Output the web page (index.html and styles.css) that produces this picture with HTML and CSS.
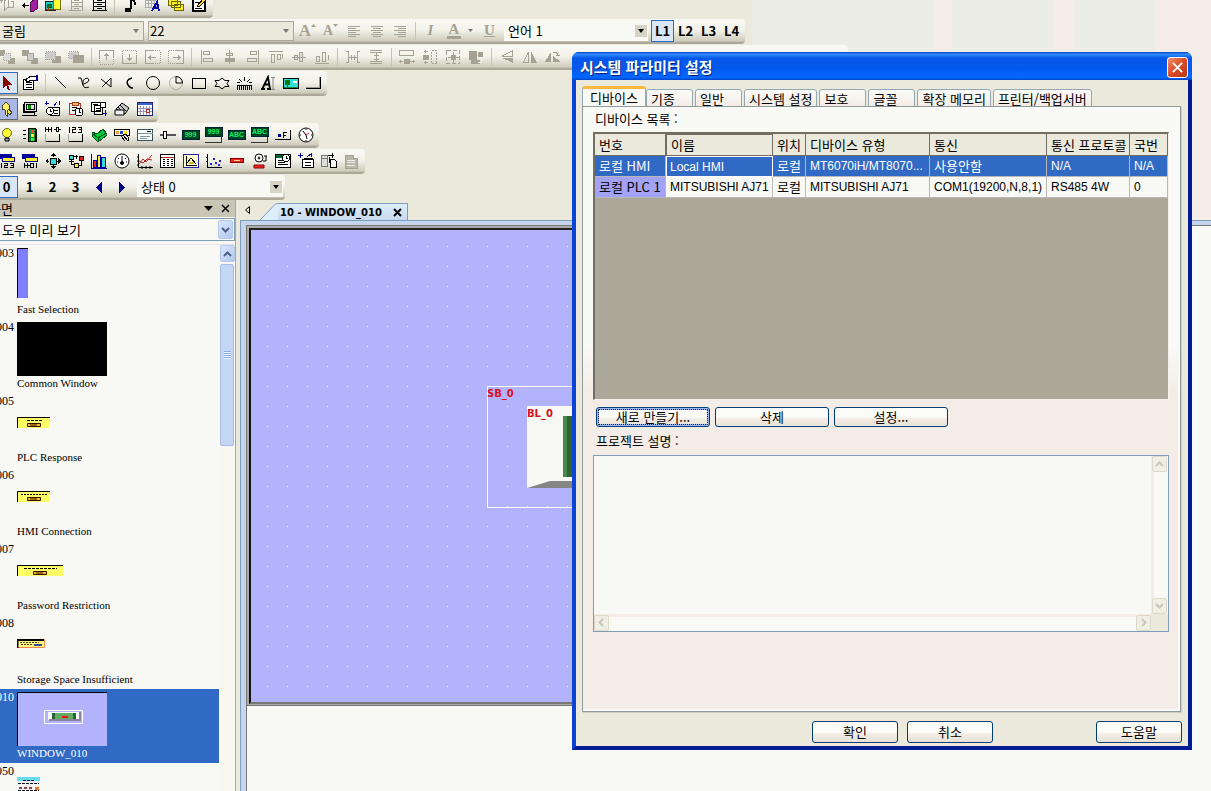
FILE: index.html
```
<!DOCTYPE html>
<html lang="ko">
<head>
<meta charset="utf-8">
<title>시스템 파라미터 설정</title>
<link rel="stylesheet" href="styles.css">
</head>
<body>
<div class="app">
<header class="toolbars">

<div class="bar bar-first">
<button class="tb" aria-label="가져오기"><svg class="i g" viewBox="0 0 16 16"><path d="M0 3.500h4M2.500 1v5M5.500 4v9l4-3V1zM9.500 10h5V4h-3"/></svg></button>
<button class="tb" aria-label="내보내기"><svg class="i" viewBox="0 0 16 16"><path d="M8 6l5-4 2 1v9l-5 3-2-1z" fill="#a020a0" stroke="#501050"/><path d="M0 8.500h7M2.500 6v5M1.500 7v3"/></svg></button>
<button class="tb" aria-label="그림"><svg class="i" viewBox="0 0 16 16"><path d="M.5 4.500h10v9h-10z" fill="#2cc" stroke="#222"/><path d="M8 1h7v11H8z" fill="#ff3" stroke="#770"/><path d="M2 7h4v3H2z" fill="#083" stroke="#052"/><path d="M3.500 10v4M1 12.500h9" stroke="#840"/></svg></button>
<button class="tb" aria-label="서랍"><svg class="i g" viewBox="0 0 16 16"><path d="M3.500 0v14M14.500 0v14M3 1.500h11M3 5.500h11M3 9.500h11M1 13.500h12M6 3.500h5M6 7.500h5M6 11.500h5"/></svg></button>
<button class="tb" aria-label="보관함"><svg class="i" viewBox="0 0 16 16"><path d="M2.500 0v14M14.500 0v14M2 1.500h12M2 5.500h12M2 9.500h12M1 13.500h15M6 3.500h5M6 7.500h5M6 11.500h5"/></svg></button>
<span class="sep"></span>
<button class="tb" aria-label="소리"><svg class="i" viewBox="0 0 16 16"><path d="M8.500 12V0M9.500 1l3 4v3" stroke-width="2"/><path d="M3 11h5v3H3z" fill="#000"/></svg></button>
<button class="tb" aria-label="글자 표"><svg class="i" viewBox="0 0 16 16"><path d="M.5 0v10h11V0M3.500 0v10M6.500 0v10M9.500 0v10M0 3.500h11M0 6.500h11" stroke="#aaa"/><path d="M7 14l5-9 2 9M9 11h5" stroke="#00a" stroke-width="2"/></svg></button>
<button class="tb" aria-label="태그"><svg class="i" viewBox="0 0 16 16"><path d="M.5 1.500h9v7h-9zM3.500 4.500h9v6h-9zM6.500 7.500h9v6h-9z" fill="#fe2" stroke="#660"/></svg></button>
<button class="tb" aria-label="편집"><svg class="i" viewBox="0 0 16 16"><path d="M1.500 1.500h12v12h-12z" fill="#fff" stroke-width="2"/><path d="M4 5h4M4 11h7"/><path d="M6 9l7-8 2 2-7 7z" fill="#fd2"/></svg></button>
</div>

<div class="bar bar-font">
<select class="cmb cmb-off" aria-label="글꼴"><option>굴림</option></select>
<select class="cmb cmb-off" aria-label="크기"><option>22</option></select>
<button class="tb glyph" aria-label="글자 크게">A<svg class="mini" viewBox="0 0 5 3"><path d="M0 3l2.500-3L5 3z"/></svg></button>
<button class="tb glyph small" aria-label="글자 작게">A<svg class="mini" viewBox="0 0 5 3"><path d="M0 0l2.500 3L5 0z"/></svg></button>
<button class="tb" aria-label="왼쪽"><svg class="i g" viewBox="0 0 16 16"><path d="M2 3.500h12M2 5.500h8M2 7.500h12M2 9.500h8M2 11.500h12M2 13.500h8"/></svg></button>
<button class="tb" aria-label="가운데"><svg class="i g" viewBox="0 0 16 16"><path d="M2 3.500h12M4 5.500h8M2 7.500h12M4 9.500h8M2 11.500h12M4 13.500h8"/></svg></button>
<button class="tb" aria-label="오른쪽"><svg class="i g" viewBox="0 0 16 16"><path d="M2 3.500h12M6 5.500h8M2 7.500h12M6 9.500h8M2 11.500h12M6 13.500h8"/></svg></button>
<span class="sep"></span>
<button class="tb glyph italic" aria-label="기울임">I</button>
<button class="tb glyph wide color" aria-label="글자색"><span>A</span><svg class="mini" viewBox="0 0 5 3"><path d="M0 0l2.500 3L5 0z"/></svg></button>
<button class="tb glyph line" aria-label="밑줄">U</button>
<select class="cmb" aria-label="언어"><option>언어 1</option></select>
<button class="tb on lang">L1</button><button class="tb lang">L2</button><button class="tb lang">L3</button><button class="tb lang">L4</button>
</div>

<div class="bar bar-align">
<button class="tb" aria-label="맨 앞으로"><svg class="i g" viewBox="0 0 16 16"><path d="M0 1h6v6H0zM9 9h7v6H9z" class="gf"/><path d="M4.500 4.500h7v7h-7z" fill="#ddd" stroke-dasharray="1 1"/></svg></button>
<button class="tb" aria-label="맨 뒤로"><svg class="i g" viewBox="0 0 16 16"><path d="M0 1h7v6H0zM9 9h7v6H9z" class="gf"/><path d="M5.500 4.500h6v7h-6z" fill="#ccc"/></svg></button>
<button class="tb" aria-label="앞으로"><svg class="i g" viewBox="0 0 16 16"><path d="M7 7h9v7H7z" class="gf"/><path d="M.5 2.500h10v8H.5z" fill="#ccc" stroke-dasharray="1 1"/></svg></button>
<button class="tb" aria-label="뒤로"><svg class="i g" viewBox="0 0 16 16"><path d="M.5 2.500h10v7H.5z" fill="#ccc" stroke-dasharray="1 1"/><path d="M5 6h11v8H5z" class="gf"/></svg></button>
<span class="sep"></span>
<button class="tb" aria-label="위로 이동"><svg class="i g" viewBox="0 0 16 16"><path d="M.5 9V1.500h14V9M7.500 11V4M5 6.500h5M6 5.500h3"/><path d="M.5 9v6h14V9" stroke-dasharray="1 1"/></svg></button>
<button class="tb" aria-label="아래로 이동"><svg class="i g" viewBox="0 0 16 16"><path d="M.5 7v7.500h14V7M7.500 5v7M5 9.500h5M6 10.500h3"/><path d="M.5 7V1.500h14V7" stroke-dasharray="1 1"/></svg></button>
<button class="tb" aria-label="왼쪽으로 이동"><svg class="i g" viewBox="0 0 16 16"><path d="M8 1.500H.5v13H8M3 8.500h8M5.500 6v5M4.500 7v3"/><path d="M8 1.500h7v13H8" stroke-dasharray="1 1"/></svg></button>
<button class="tb" aria-label="오른쪽으로 이동"><svg class="i g" viewBox="0 0 16 16"><path d="M8 1.500h7.500v13H8M5 8.500h8M10.500 6v5M11.500 7v3"/><path d="M8 1.500H.5v13H8" stroke-dasharray="1 1"/></svg></button>
<span class="sep"></span>
<button class="tb" aria-label="왼쪽 맞춤"><svg class="i g" viewBox="0 0 16 16"><path d="M2.500 1v14M4.500 2.500h6v3h-6zM4.500 9.500h9v3h-9z" stroke-width="1"/></svg></button>
<button class="tb" aria-label="세로 가운데 맞춤"><svg class="i g" viewBox="0 0 16 16"><path d="M7.500 1v14M4.500 4.500h6v2h-6z"/><path d="M3 9h10v4H3z" class="gf"/></svg></button>
<button class="tb" aria-label="오른쪽 맞춤"><svg class="i g" viewBox="0 0 16 16"><path d="M13.500 1v14M5.500 2.500h6v3h-6zM2.500 9.500h9v3h-9z"/></svg></button>
<button class="tb" aria-label="위쪽 맞춤"><svg class="i g" viewBox="0 0 16 16"><path d="M1 2.500h14M3.500 5.500h3v8h-3zM9.500 5.500h3v5h-3zM14.500 5v5"/></svg></button>
<button class="tb" aria-label="가로 가운데 맞춤"><svg class="i g" viewBox="0 0 16 16"><path d="M1 8.500h14M3.500 6.500h3v4h-3zM8.500 3.500h3v9h-3z" fill="#ddd"/></svg></button>
<button class="tb" aria-label="아래쪽 맞춤"><svg class="i g" viewBox="0 0 16 16"><path d="M1 14.500h14M2.500 7.500h3v5h-3zM8.500 3.500h3v9h-3zM14.500 6v5"/></svg></button>
<span class="sep"></span>
<button class="tb" aria-label="가로 간격"><svg class="i g" viewBox="0 0 16 16"><path d="M1 2.500h2.500v11H1M15 2.500h-2.500v11H15M4 8.500h8M6.500 6v5M9.500 6v5"/></svg></button>
<button class="tb" aria-label="세로 간격"><svg class="i g" viewBox="0 0 16 16"><path d="M2 1.500h12M2 3.500h12M8.500 4v8M6 6.500h5M6 10.500h5M2 12.500h12M2 14.500h12"/></svg></button>
<span class="sep"></span>
<button class="tb" aria-label="같은 너비"><svg class="i g" viewBox="0 0 16 16"><path d="M.5 1.500h14v5H.5z"/><path d="M0 12.500h4M11 12.500h5M1.500 11v3M14.500 11v3"/><path d="M5 10h6v5H5z" class="gf"/></svg></button>
<button class="tb" aria-label="같은 높이"><svg class="i g" viewBox="0 0 16 16"><path d="M9.500 1.500h5v13h-5z" stroke-dasharray="2 1"/><path d="M3.500 1v3M3.500 12v3M2 2.500h4M2 13.500h4"/><path d="M1 6h6v5H1z" class="gf"/></svg></button>
<button class="tb" aria-label="같은 크기"><svg class="i g" viewBox="0 0 16 16"><path d="M1.500 1.500h13v13h-13z" stroke-dasharray="4 2"/><path d="M8.500 3v3M8.500 10v4M3 8.500h3M11 8.500h3"/><path d="M6 6h5v5H6z" class="gf"/></svg></button>
<button class="tb" aria-label="그룹"><svg class="i g" viewBox="0 0 16 16"><path d="M1 2h8v9H1zM10 3h5v5h-5zM3 11h9v4H3z" class="gf"/><path d="M9.500 8.500h4v5h-4" stroke="#eee"/></svg></button>
<span class="sep"></span>
<button class="tb" aria-label="상하 대칭"><svg class="i g" viewBox="0 0 16 16"><path d="M13.500 2v5H3z"/><path d="M3 9h11v5z" class="gf"/></svg></button>
<button class="tb" aria-label="좌우 대칭"><svg class="i g" viewBox="0 0 16 16"><path d="M6.500 3v10h-5z"/><path d="M9 2v12h6z" class="gf"/></svg></button>
<button class="tb" aria-label="회전"><svg class="i g" viewBox="0 0 16 16"><path d="M6 3L0 13h6zM8 13h8L8 7z" class="gf"/><path d="M8 3h3l2 3M11 6h4"/></svg></button>
</div>

<div class="bar">
<button class="tb on" aria-label="선택"><svg class="i" viewBox="0 0 16 16"><path d="M4 1v12l3-3 2 5h2l-2-5h4z" fill="#800" stroke="none"/></svg></button>
<button class="tb" aria-label="속성"><svg class="i" viewBox="0 0 16 16"><path d="M1.500 4.500h10v10h-10z" fill="#fff"/><path d="M4 7h6M4 9.500h6M4 12h6"/><path d="M3 5l6-4h5v4H9L6 7z" fill="#fff"/><path d="M14.500 0v6" stroke="#009" stroke-width="2"/></svg></button>
<span class="sep"></span>
<button class="tb" aria-label="직선"><svg class="i" viewBox="0 0 16 16"><path d="M2 2l11 11"/></svg></button>
<button class="tb" aria-label="곡선"><svg class="i s" viewBox="0 0 16 16"><path d="M2 3h3l2 7M7 10Q6 5 9 3.500T13 5Q13 7 8 9M7 10Q8 14 13 12"/></svg></button>
<button class="tb" aria-label="다각선"><svg class="i s" viewBox="0 0 16 16"><path d="M2 4l10 8V3L3 12"/></svg></button>
<button class="tb" aria-label="호"><svg class="i s" viewBox="0 0 16 16"><path d="M10 3Q3 5 6 10Q8 13 11 13" stroke-width="1.500"/></svg></button>
<button class="tb" aria-label="원"><svg class="i s" viewBox="0 0 16 16"><circle cx="8" cy="8" r="6.500"/></svg></button>
<button class="tb" aria-label="부채꼴"><svg class="i s" viewBox="0 0 16 16"><circle cx="8" cy="8" r="6.500" stroke="#aaa"/><path d="M8 1.500V8h6.500Q14 2 8 1.500z"/></svg></button>
<button class="tb" aria-label="사각형"><svg class="i" viewBox="0 0 16 16"><rect x="1.500" y="3.500" width="13" height="10" rx="1"/></svg></button>
<button class="tb" aria-label="다각형"><svg class="i s" viewBox="0 0 16 16"><path d="M1 5.500h4L8 3l3 2.500h4L13 8.500l2 3h-4L8 14l-3-2.500H1l2-3z"/></svg></button>
<button class="tb" aria-label="눈금"><svg class="i" viewBox="0 0 16 16"><path d="M.5 10v5M2.500 10v5M4.500 10v5M6.500 10v5M8.500 10v5M10.500 10v5M12.500 10v5M14.500 10v5M0 10.500h15M7.500 2v4M2 4l3 3M13 4l-3 3M0 7.500h3M12 7.500h3"/></svg></button>
<button class="tb" aria-label="문자"><svg class="i s" viewBox="0 0 16 16"><path d="M1 14h4M7 14h4M2.500 13.500L8 2l2 12M5 9.500h4" stroke-width="1.800"/><path d="M11 2.500h4M13 3v11M11 14.500h4" stroke="#888"/></svg></button>
<button class="tb" aria-label="이미지"><svg class="i" viewBox="0 0 16 16"><path d="M.5 3.500h15v10H.5z" fill="#3dd"/><path d="M2 5h5v5H2z" fill="#070" stroke="none"/><path d="M10 6h4v2h-4z" fill="#fff" stroke="none"/><path d="M4.500 9v3" stroke="#840"/><path d="M1 12.500h14" stroke="#283"/></svg></button>
<button class="tb" aria-label="버튼"><svg class="i" viewBox="0 0 16 16"><path d="M0 13.500h14.500V2"/><path d="M0 12.500h13.500V2" stroke="#999"/></svg></button>
</div>

<div class="bar">
<button class="tb press" aria-label="키"><svg class="i" viewBox="0 0 16 16"><path d="M3 5l4-4 3 3v4l-2 2v5l-2-2V9L3 8zM9 8l4 3-2 3-2-2" fill="#fe6" stroke="#442"/></svg></button>
<button class="tb" aria-label="장치"><svg class="i" viewBox="0 0 16 16"><path d="M2.500 1.500h12v9h-12zM0 14.500h15M1.500 3v8h11v3M4.500 3.500h8v5h-8z" fill="#ddd"/><path d="M6 4h3v4H6z" fill="#080" stroke="none"/></svg></button>
<button class="tb" aria-label="예약"><svg class="i" viewBox="0 0 16 16"><path d="M5.500 6.500h9v8h-9z" fill="#fff"/><circle cx="5" cy="10" r="3.500" fill="#fff"/><path d="M5 8v2h2M9 9h4M9 12h4"/><path d="M0 2h4M1.500 0v4M12 1l-3 4M14.500 0v4" stroke="#00a"/></svg></button>
<button class="tb" aria-label="클립보드"><svg class="i" viewBox="0 0 16 16"><path d="M1.500 2.500h11v11h-11z" fill="#eee" stroke="#a33"/><path d="M4 1h6v3H4z" fill="#fc3" stroke="#a33"/><circle cx="11" cy="11" r="4" fill="#fff"/><path d="M11 8v3h2M3.500 6.500h5M3.500 9.500h3"/></svg></button>
<button class="tb" aria-label="기록"><svg class="i" viewBox="0 0 16 16"><path d="M.5 1.500h9v9h-9zM3.500 4.500h8v9h-8z" fill="#fff"/><path d="M2 3.500h5M5 7h5M5 9.500h5"/><circle cx="12" cy="4" r="3" fill="#fff"/><path d="M14.500 9v6M12 12.500h4" stroke="#00a"/></svg></button>
<button class="tb" aria-label="카드"><svg class="i s" viewBox="0 0 16 16"><path d="M2 8l6-6 7 5-4 6z" fill="#ccc"/><path d="M4 6l5 6M6 4l6 6"/><path d="M1 9h9v5H1z" fill="#eee"/></svg></button>
<button class="tb" aria-label="달력"><svg class="i" viewBox="0 0 16 16"><path d="M.5 1.500h15v13H.5z" fill="#fff" stroke="#226"/><path d="M1 3h14" stroke="#36c" stroke-width="2"/><path d="M3.500 5v9M6.500 5v9M9.500 5v9M12.500 5v9M1 7.500h14M1 10.500h14" stroke="#99b"/><path d="M9 8h3v3H9z" fill="#fff" stroke="#c22"/></svg></button>
</div>

<div class="bar">
<button class="tb" aria-label="램프"><svg class="i s" viewBox="0 0 16 16"><circle cx="8" cy="6" r="4.500" fill="#ff3" stroke="#662"/><path d="M6 11h4v3H6z" fill="#999"/></svg></button>
<button class="tb" aria-label="신호등"><svg class="i" viewBox="0 0 16 16"><path d="M6.500 1.500h7v13h-7z" fill="#083"/><path d="M9 3h2v2H9z" fill="#f44" stroke="#f44"/><path d="M9 7h2v2H9z" fill="#fe3" stroke="#fe3"/><path d="M9 11h2v2H9z" fill="#3f3" stroke="#3f3"/><path d="M1 3.500h3M1 7.500h3M1 11.500h3M14.500 2v13"/></svg></button>
<button class="tb" aria-label="비트 설정"><svg class="i" viewBox="0 0 16 16"><path d="M.5 0v5M3.500 0v5M0 2.500h6M6.500 0v5M9 2.500h2M11.500.5h2v4h-2zM14 2.500h2M1 14.500h13.500V7"/><path d="M.5 7v8" stroke="#aaa"/></svg></button>
<button class="tb" aria-label="워드 설정"><svg class="i" viewBox="0 0 16 16"><path d="M1.500 0v6M4 .5h3.500v2h-3v3H8M10 .5h3.500v5H10M11 2.500h2M1 14.500h13.500V7"/><path d="M.5 7v8" stroke="#aaa"/></svg></button>
<button class="tb" aria-label="기능 키"><svg class="i" viewBox="0 0 16 16"><path d="M1 5l5 2 6-5 3 4v3l-8 6-6-6z" fill="#0c3" stroke="#052"/><path d="M1 6l6 5 8-5M7 11v4" stroke="#052"/></svg></button>
<button class="tb" aria-label="토글"><svg class="i" viewBox="0 0 16 16"><path d="M.5 2.500h15v6H.5z" fill="#fff"/><path d="M2 4h3v3H2z" fill="#da2" stroke="none"/><path d="M6 4h3v3H6z" fill="#24c" stroke="none"/><path d="M10 4h3v3h-3z" fill="#fd2" stroke="none"/><path d="M9 8l5 6 1-3-3-4zM7 9l4 5" fill="#eee"/></svg></button>
<button class="tb" aria-label="콤보"><svg class="i" viewBox="0 0 16 16"><path d="M.5 2.500h15v11H.5z" fill="#fff" stroke="#355"/><path d="M.5 6.500h15M3 9.500h10M3 11.500h7" stroke="#799"/><path d="M10 4.500h4" stroke="#000"/></svg></button>
<button class="tb" aria-label="슬라이더"><svg class="i" viewBox="0 0 16 16"><path d="M0 7.500h15v1H0z" stroke="#555"/><path d="M3.500 4.500h3v7h-3z" fill="#fff"/></svg></button>
<button class="tb lcd" aria-label="숫자 표시"><span>999</span></button>
<button class="tb lcd pad" aria-label="숫자 입력"><span>999</span></button>
<button class="tb lcd" aria-label="문자 표시"><span>ABC</span></button>
<button class="tb lcd pad" aria-label="문자 입력"><span>ABC</span></button>
<button class="tb" aria-label="기능"><svg class="i" viewBox="0 0 16 16"><path d="M0 12.500h15.500V3"/><path d="M3 7h3v3H3z" fill="#008" stroke="none"/><path d="M8.500 11V5.500H12M8 8.500h3"/></svg></button>
<button class="tb" aria-label="시계"><svg class="i s" viewBox="0 0 16 16"><circle cx="8" cy="8" r="7" fill="#fff"/><path d="M8 8L5 4M8 8l1 4M8 2v1M8 13v1M2 8h1M13 8h1"/><path d="M8 8l3-2" stroke="#c22"/></svg></button>
</div>

<div class="bar">
<button class="tb" aria-label="간접 숫자"><svg class="i" viewBox="0 0 16 16"><path d="M0 1h12v4H0z" fill="#009" stroke="#009"/><path d="M3 4h12v4H3z" fill="#fe3" stroke="#009"/><path d="M2.500 10v5M5 10.500h3v2H5.500v2H9M11 10.500h3v4h-3M12 12.500h2"/></svg></button>
<button class="tb" aria-label="간접 비트"><svg class="i" viewBox="0 0 16 16"><path d="M0 1h12v4H0z" fill="#009" stroke="#009"/><path d="M3 4h12v4H3z" fill="#fe3" stroke="#009"/><path d="M2.500 10v5M5.500 10v5M3 12.500h5M8.500 10.500h3v4h-3zM14.500 10v5"/></svg></button>
<button class="tb" aria-label="이동"><svg class="i" viewBox="0 0 16 16"><path d="M5 5h6v6H5z" fill="#3dd"/><path d="M8 1v3M8 12v3M1 8h3M12 8h3" /><path d="M8 0l3 3H5zM8 16l3-3H5zM0 8l3-3v6zM16 8l-3-3v6z" fill="#000" stroke="none"/></svg></button>
<button class="tb" aria-label="애니메이션"><svg class="i" viewBox="0 0 16 16"><path d="M1 2h4v4H1z" fill="#3dd"/><path d="M11 3h4v4h-4z" fill="#d22"/><path d="M6 10h4v4H6z" fill="#fe3"/><path d="M6 3.500h4M8.500 2v4M13.500 8v4h-3M3.500 7v4h2M1 8.500h5"/></svg></button>
<button class="tb" aria-label="막대"><svg class="i" viewBox="0 0 16 16"><path d="M.5 1v14h15" stroke="#009"/><path d="M2 7h3v7H2z" fill="#e22" stroke="#009"/><path d="M6 2h3v12H6z" fill="#fe3" stroke="#009"/><path d="M10 4h4v10h-4z" fill="#3dd" stroke="#009"/></svg></button>
<button class="tb" aria-label="계기"><svg class="i s" viewBox="0 0 16 16"><circle cx="8" cy="8" r="7" fill="#fff"/><path d="M8 10V3M4 5l1 1M12 5l-1 1M3 9h1M12 9h1"/><circle cx="8" cy="10" r="1.500" fill="#000"/></svg></button>
<button class="tb" aria-label="추세"><svg class="i s" viewBox="0 0 16 16"><path d="M1.500 1v13.500H16M0 4h2M0 8h2M0 12h2M5 13v3M9 13v3M13 13v3"/><path d="M2 11l4-5 3 3 6-7" stroke="#b22"/><path d="M2 8l4 2 4-4 5 1" stroke="#b22"/></svg></button>
<button class="tb" aria-label="이력"><svg class="i" viewBox="0 0 16 16"><path d="M.5 1.500h14v13H.5z" fill="#fff"/><path d="M1 4.500h13" stroke="#a22"/><path d="M3 6.500h10M3 8.500h10M3 10.500h10M3 12.500h10" stroke-dasharray="2 2"/></svg></button>
<button class="tb" aria-label="데이터 블록"><svg class="i" viewBox="0 0 16 16"><path d="M.5 1.500h15v13H.5z" fill="#ffc" stroke="#22a"/><path d="M3.500 3v9.500H14M4 10l4-5 5 6"/><path d="M6 9h5v2H6z" fill="#da2" stroke="none"/></svg></button>
<button class="tb" aria-label="XY 그래프"><svg class="i" viewBox="0 0 16 16"><path d="M1.500 1v13.500H16M0 4h2M0 8h2"/><path d="M4 10h2v2H4zM7 5h2v2H7zM9 9h2v2H9zM13 7h2v2h-2zM12 11h2v2h-2z" fill="#22c" stroke="none"/></svg></button>
<button class="tb" aria-label="경보"><svg class="i" viewBox="0 0 16 16"><path d="M1.500 5.500h13v4h-13z" fill="#e22" stroke="#800"/><path d="M5 7.500h6" stroke="#fd8"/><path d="M4 11l-3 3M12 11l3 3M8 11v3" stroke="#ccc"/></svg></button>
<button class="tb" aria-label="이벤트"><svg class="i s" viewBox="0 0 16 16"><circle cx="7" cy="5" r="4" fill="#fff"/><circle cx="7" cy="5" r="1"/><path d="M11 8h3V3M12 3h3"/><path d="M2 12h10v3H2z" fill="#e22" stroke="#800"/></svg></button>
<button class="tb" aria-label="이벤트 표시"><svg class="i" viewBox="0 0 16 16"><path d="M.5 1.500h15v13H.5z" fill="#fff"/><path d="M1 3h8" stroke="#063" stroke-width="3"/><path d="M3 7.500h5M3 9.500h7M3 11.500h10"/><circle cx="11" cy="5" r="3.500" fill="#fff"/><path d="M11 3v2h2"/></svg></button>
<button class="tb" aria-label="전송"><svg class="i" viewBox="0 0 16 16"><path d="M4.500 6.500h11v8h-11z" fill="#fff"/><path d="M7 9.500h6M7 12.500h6M6 5h9" /><path d="M0 2.500h5M2.500 0v5M13.500 0v4M9 4l4-3" stroke="#00a"/></svg></button>
<button class="tb" aria-label="백업"><svg class="i" viewBox="0 0 16 16"><path d="M.5 2.500h6v11h-6zM1 5.500h5" fill="#ddd" stroke="#777"/><path d="M9.500 6.500h4l2 2v6h-6z" fill="#fff"/><path d="M7 2.500h6M11.500 0v5M8.500 4v6"/></svg></button>
<button class="tb" aria-label="기타"><svg class="i g" viewBox="0 0 16 16"><path d="M1 2h8v3h4v10H1z" fill="#bbb7a8"/><path d="M3 7.500h8M3 9.500h8M3 12.500h8" stroke="#eee"/></svg></button>
</div>

<div class="bar">
<button class="tb on num">0</button><button class="tb num">1</button><button class="tb num">2</button><button class="tb num">3</button>
<button class="tb" aria-label="이전 상태"><svg class="i" viewBox="0 0 16 16"><path d="M11 3v11L5 8.500z" fill="#008" stroke="none"/></svg></button>
<button class="tb" aria-label="다음 상태"><svg class="i" viewBox="0 0 16 16"><path d="M5 3v11l6-5.500z" fill="#008" stroke="none"/></svg></button>
<select class="cmb cmb-state" aria-label="상태"><option>상태 0</option></select>
</div>
</header>

<main class="work">
<aside class="pane">
<div class="pane-head"><span class="pane-name">화면</span>
<button class="pbtn" aria-label="메뉴"><svg width="9" height="5" viewBox="0 0 9 5"><path d="M0 0h9L4.500 5z"/></svg></button>
<button class="pbtn" aria-label="창 닫기"><svg width="9" height="9" viewBox="0 0 9 9"><path d="M1 1l7 7M8 1L1 8" stroke="#000" stroke-width="1.500"/></svg></button></div>
<div class="view"><select aria-label="보기"><option>도우 미리 보기</option></select><span class="xp"><svg viewBox="0 0 9 6"><path d="M1 1l3.500 3.500L8 1"/></svg></span></div>
<div class="list-box">
<ul class="list">
<li><span class="no">003</span><div class="th"><svg width="11" height="50"><path d="M0 0h11v50H0z" fill="#8080ff"/><path d="M.5 50V.5H11" fill="none" stroke="#000"/></svg></div><span class="cap">Fast Selection</span></li>
<li><span class="no">004</span><div class="th"><svg width="90" height="54"><path d="M0 0h90v54H0z"/></svg></div><span class="cap">Common Window</span></li>
<li><span class="no">005</span><div class="th mid"><svg width="33" height="11"><path d="M0 0h33v11H0z" fill="#ff6"/><path d="M.5 11V.5H33" fill="none" stroke="#000"/><path d="M10 3.500h15" stroke="#000" stroke-dasharray="3 1"/><path d="M10.500 6.500h13v3h-13z" fill="#fb2" stroke="#310"/><path d="M13 8h7" stroke="#310"/></svg></div><span class="cap">PLC Response</span></li>
<li><span class="no">006</span><div class="th mid"><svg width="33" height="11"><path d="M0 0h33v11H0z" fill="#ff6"/><path d="M.5 11V.5H33" fill="none" stroke="#000"/><path d="M4 3.500h27" stroke="#000" stroke-dasharray="2 1"/><path d="M10.500 6.500h13v3h-13z" fill="#fb2" stroke="#310"/><path d="M13 8h7" stroke="#310"/></svg></div><span class="cap">HMI Connection</span></li>
<li><span class="no">007</span><div class="th mid"><svg width="46" height="11"><path d="M0 0h46v11H0z" fill="#ff6"/><path d="M.5 11V.5H46" fill="none" stroke="#000"/><path d="M7 3.500h33" stroke="#000" stroke-dasharray="3 1"/><path d="M16.500 6.500h13v3h-13z" fill="#fb2" stroke="#310"/><path d="M19 8h7" stroke="#310"/></svg></div><span class="cap">Password Restriction</span></li>
<li><span class="no">008</span><div class="th mid"><svg width="28" height="9"><path d="M.5.5h27v8H.5z" fill="#ff8" stroke="#e84"/><path d="M.5 9V1H27" fill="none" stroke="#000" stroke-width="2"/><path d="M3 3.500h19M4 5.500h11" stroke="#630" stroke-dasharray="2 1"/><path d="M17 5h8v2h-8z" fill="#448"/></svg></div><span class="cap">Storage Space Insufficient</span></li>
<li class="sel"><span class="no">010</span><div class="th"><svg width="90" height="54"><path d="M0 0h90v54H0z" fill="#b3b3fb"/><path d="M.5 54V.5H90" fill="none" stroke="#000"/><path d="M27.500 18.500h38v13h-38z" fill="#b3b3fb" stroke="#fff"/><path d="M31 20h31v8H31z" fill="#fff"/><path d="M32 28h31v-8" fill="none" stroke="#889" stroke-width="2"/><path d="M35 21h24v6H35z" fill="#6a6"/><path d="M36.500 21v6M57.500 21v6" stroke="#263" stroke-width="3"/><path d="M45 24h6v2h-6z" fill="#e11"/></svg></div><span class="cap">WINDOW_010</span></li>
<li><span class="no">050</span><div class="th low"><svg width="23" height="18"><path d="M0 0h23v18H0z" fill="#f4f4f4"/><path d="M0 0h23v4H0z" fill="#6de"/><path d="M6 3.500h12M1 6.500h21M1 13.500h21" stroke="#112" stroke-dasharray="3 1"/><path d="M2 11h3M7 11h3M12 11h3" stroke="#844" stroke-width="2"/><path d="M18 10h4v3h-4z" fill="#e73"/></svg></div><span class="cap"></span></li>
</ul>
<div class="sb"><span class="xp"><svg viewBox="0 0 9 6"><path d="M1 5l3.500-3.500L8 5"/></svg></span><span class="knob"><i></i></span></div>
</div>
</aside>

<section class="doc">
<div class="tabs">
<svg class="back" viewBox="0 0 5 8"><path d="M4.500.5v7L.5 4z"/></svg>
<div class="dtab"><svg class="slope" viewBox="0 0 18 17"><path d="M0 17L15 1.500Q16 .5 18 .5V17z" fill="#dceefa"/><path d="M0 17L15 1.500Q16 .5 18 .5" fill="none" stroke="#7f9db9"/></svg><span>10 - WINDOW_010</span><button class="x" aria-label="탭 닫기"><svg width="9" height="9" viewBox="0 0 9 9"><path d="M1 1l7 7M8 1L1 8" stroke="#000" stroke-width="2"/></svg></button></div>
</div>
<div class="frame"><div class="mdi"><div class="canvas">
<svg class="art" width="800" height="472">
<defs><pattern id="dots" width="20" height="20" patternUnits="userSpaceOnUse" x="16" y="16"><path d="M0 0h1v1H0z" fill="#f4f4ff"/></pattern></defs>
<path d="M0 0h800v472H0z" fill="#b3b3fb"/><path d="M0 0h800v472H0z" fill="url(#dots)"/>
<path d="M236.500 156.500h360v121h-360z" fill="none" stroke="#fff"/>
<path d="M276 176h280v82H276z" fill="#f8f9f5"/>
<path d="M276 258l23-7h257v7z" fill="#858585"/>
<path d="M312 186h200v61H312z" fill="#478a4b"/><path d="M316 186h190v61H316z" fill="#2f6236"/>
<text x="236" y="167">SB_0</text><text x="276" y="187">BL_0</text>
</svg></div></div></div>
</section>
</main>

<div class="dlg" role="dialog" aria-labelledby="dt">
<div class="dlg-title"><h1 id="dt">시스템 파라미터 설정</h1><button class="close" aria-label="닫기"><svg viewBox="0 0 12 12"><path d="M1 1l10 10M11 1L1 11"/></svg></button></div>
<div class="dlg-body">
<div class="dtabs" role="tablist">
<button role="tab" class="cur">디바이스</button><button role="tab" class="t1">기종</button><button role="tab" class="t1">일반</button><button role="tab">시스템 설정</button><button role="tab" class="t1">보호</button><button role="tab" class="t1">글꼴</button><button role="tab">확장 메모리</button><button role="tab">프린터/백업서버</button>
</div>
<div class="panel">
<p class="lbl">디바이스 목록 :</p>
<div class="grid">
<table>
<colgroup><col class="c1"><col class="c2"><col class="c3"><col class="c4"><col class="c5"><col class="c6"><col class="c7"></colgroup>
<thead><tr><th>번호</th><th class="sorted">이름</th><th>위치</th><th>디바이스 유형</th><th>통신</th><th>통신 프로토콜</th><th>국번</th></tr></thead>
<tbody>
<tr class="hl"><td>로컬 HMI</td><td class="focus lat">Local HMI</td><td>로컬</td><td class="lat">MT6070iH/MT8070...</td><td>사용안함</td><td class="lat">N/A</td><td class="lat">N/A</td></tr>
<tr><td class="key">로컬 PLC 1</td><td class="lat">MITSUBISHI AJ71</td><td>로컬</td><td class="lat">MITSUBISHI AJ71</td><td class="lat">COM1(19200,N,8,1)</td><td class="lat">RS485 4W</td><td class="lat">0</td></tr>
</tbody></table>
</div>
<div class="row"><button class="btn w focusb">새로 만들기...</button><button class="btn w">삭제</button><button class="btn w">설정...</button></div>
<label class="lbl2" for="desc">프로젝트 설명 :</label>
<div class="ta"><textarea id="desc"></textarea>
<div class="vs"><span class="dis"><svg viewBox="0 0 9 6"><path d="M1 5l3.500-3.500L8 5"/></svg></span><span class="dis"><svg viewBox="0 0 9 6"><path d="M1 1l3.500 3.500L8 1"/></svg></span></div>
<div class="hs"><span class="dis"><svg viewBox="0 0 9 9"><path d="M6 1L2.500 4.500 6 8"/></svg></span><span class="dis"><svg viewBox="0 0 9 9"><path d="M3 1l3.500 3.500L3 8"/></svg></span></div>
</div>
</div>
<div class="foot"><button class="btn">확인</button><button class="btn">취소</button><button class="btn help">도움말</button></div>
</div>
</div>
</div>
</body>
</html>
```
FILE: styles.css
```
* { box-sizing: border-box; }
html, body { height: 100%; }
body {
  margin: 0; overflow: hidden; color: #000;
  font: 13px/16px "Noto Sans CJK KR", "Liberation Sans", sans-serif;
}
button, select, textarea { font: inherit; color: inherit; }
button { border: 0; background: none; padding: 0; }
.app {
  position: relative; height: 100%; overflow: hidden; display: flex; flex-direction: column;
  background: linear-gradient(90deg, #ebe9dc 752px, #ebede6 752px 934px, #f4ece6 934px 952px, #ebede6 952px 1054px, #f4ece6 1054px 1074px, #ebede6 1074px 1155px, #f4ece6 1155px);
}

/* toolbars */
.toolbars { display: flex; flex-direction: column; align-items: flex-start; gap: 1px; margin-top: -7px; flex: none; }
.bar {
  display: flex; align-items: center; height: 25px; padding: 0 2px 2px 0; margin-left: -5px;
  background: linear-gradient(#f9f9f5, #f3f2ea 45%, #cfccbd 88%, #aca899 94%);
  border-radius: 0 4px 4px 0;
}
.bar-first { padding-right: 3px; }
.bar-align { width: 853px; }
.tb { width: 23px; height: 22px; flex: none; display: flex; align-items: center; justify-content: center; }
.tb.on { background: #d8e6f6; border: 1px solid #316ac5; }
.tb.press { background: #a9b8e6; border: 1px solid #666; }
.i { width: 16px; height: 16px; fill: none; stroke: #000; shape-rendering: crispEdges; }
.i.s { shape-rendering: auto; }
.i.g { stroke: #a5a294; }
.i .gf { fill: #a5a294; stroke: none; }
.sep { width: 8px; height: 18px; flex: none; border-left: 1px solid #c5c2b2; margin-left: 4px; margin-right: -4px; }
.cmb {
  appearance: none; height: 20px; width: 144px; border: 0; padding: 0 4px; border-radius: 0; flex: none;
  background: url("data:image/svg+xml,%3Csvg xmlns='http://www.w3.org/2000/svg' width='12' height='12'%3E%3Cpath d='M0 0h12v12H0z' fill='%23d6d3c4'/%3E%3Cpath d='M3 4h6L6 8z'/%3E%3C/svg%3E") no-repeat right 1px center, #f8f9f4;
  line-height: 18px;
}
.cmb-off {
  background: url("data:image/svg+xml,%3Csvg xmlns='http://www.w3.org/2000/svg' width='12' height='12'%3E%3Cpath d='M3 4h6L6 8z' fill='%23777'/%3E%3C/svg%3E") no-repeat right 1px center, #ebe9dc;
  border: 1px solid #aca899; width: 146px; margin-right: 2px; padding: 0 1px;
}
.bar-font .cmb-off:first-child { width: 149px; margin-right: 4px; padding-left: 6px; }
.cmb-state { margin-left: 4px; width: 146px; }
.glyph { font: bold 17px/17px "Liberation Serif", serif; color: #a5a294; }
.glyph.small { font-size: 14px; }
.mini { width: 5px; height: 3px; fill: #a5a294; align-self: flex-start; margin-top: 4px; }
.italic { font-style: italic; font-size: 15px; }
.line { text-decoration: underline; font-size: 15px; }
.wide { width: 36px; gap: 7px; font-size: 15px; line-height: 14px; }
.wide .mini { align-self: center; margin: 0; fill: #777; }
.color span { border-bottom: 3px solid #a5a294; padding: 0 2px; }
.bar-font .wide + .line { margin-right: 3px; }
.lang, .num { font: bold 13px/18px "Noto Sans CJK KR", sans-serif; }
.bar-font > .lang.on { margin-left: 3px; }
.lcd { flex-direction: column; }
.lcd span { font: bold 7px/8px "Liberation Sans", sans-serif; color: #1e6; background: #042; border: 1px solid #023; width: 18px; text-align: center; }
.lcd.pad::after { content: ""; width: 16px; height: 5px; border: solid #333; border-width: 0 1px 1px 0; }

/* window list */
.work { flex: 1; min-height: 0; display: flex; }
.pane { width: 236px; flex: none; display: flex; flex-direction: column; background: #f8f9f4; border-right: 1px solid #aca899; }
.pane-head { height: 17px; margin-bottom: 1px; background: #c9c6b6; display: flex; align-items: center; gap: 7px; padding-right: 5px; }
.pane-name { flex: 1; margin-left: -11px; }
.pbtn { display: flex; width: 10px; justify-content: center; }
.view { height: 23px; border: 1px solid #7f9db9; border-left: 0; display: flex; align-items: center; padding-right: 1px; background: #f8f9f4; }
.view select { appearance: none; border: 0; background: none; flex: 1; padding: 0 2px; height: 20px; }
.xp { width: 15px; height: 19px; display: grid; place-items: center; border-radius: 2px; background: linear-gradient(135deg, #dbe6fd, #b3c8ef); border: 1px solid #b5c8ee; }
.xp svg, .dis svg { width: 9px; fill: none; stroke: #4d6185; stroke-width: 2; }
.list-box { flex: 1; min-height: 0; display: flex; margin-top: 3px; border-top: 1px solid #f0dfe6; }
.list { list-style: none; margin: 0; padding: 0; flex: 1; overflow: hidden; font: 11px/14px "Liberation Serif", serif; }
.list li { height: 74px; display: grid; grid-template-columns: 17px 1fr; grid-template-rows: 57px 17px; }
.no { margin-left: -4px; font-size: 12px; line-height: 16px; }
.th { padding-top: 3px; }
.th svg { display: block; }
.th.mid { padding-top: 24px; }
.th.low { padding-top: 14px; }
.cap { grid-column: 2; line-height: 14px; }
.sel { background: #316ac5; color: #fff; }
.sb { width: 16px; background: #f8f7f2; display: flex; flex-direction: column; align-items: center; gap: 2px; }
.sb .xp { height: 17px; }
.knob { width: 14px; height: 182px; background: #c5d5f4; border: 1px solid #a9bde6; border-radius: 2px; display: grid; place-items: center; }
.knob i { width: 7px; height: 8px; background: repeating-linear-gradient(#8caae6 0 1px, #eef4fe 1px 2px); }

/* document */
.doc { flex: 1; min-width: 0; margin-left: 4px; display: flex; flex-direction: column; }
.tabs { height: 20px; display: flex; align-items: flex-end; padding-left: 5px; flex: none; }
.back { width: 5px; height: 8px; margin: 0 10px 6px 0; fill: none; stroke: #000; }
.dtab { display: flex; align-items: center; height: 17px; font: bold 10px/15px "DejaVu Sans", sans-serif; }
.dtab > span, .dtab > .x { height: 17px; border-top: 1px solid #7f9db9; background: linear-gradient(#dceefa, #c9d9f2); }
.dtab > span { padding: 1px 0 0 2px; }
.slope { width: 18px; height: 17px; }
.dtab .x { padding: 0 5px 0 11px; border-right: 1px solid #7f9db9; display: flex; align-items: center; }
.frame { flex: 1; min-height: 0; border-top: 1px solid #7f9db9; border-left: 1px solid #7f9db9; background: #f8f9f4; box-shadow: inset 5px 4px #c6d5ee, inset 6px 5px #777; padding: 4px 0 0 5px; }
.mdi { display: inline-block; border: 1px solid #777; border-right: 0; background: #aaa; padding: 2px 0 1px 2px; }
.canvas { border: 2px solid; border-color: #222 #222 #777 #111; }
.art { display: block; }
.art text { fill: #d8101c; font: bold 10px "DejaVu Sans", sans-serif; }

/* dialog */
.dlg { position: absolute; left: 572px; top: 52px; width: 620px; height: 698px; background: #0831d9; border-radius: 7px 7px 0 0; border: solid; border-width: 0 4px 4px 4px; border-color: #0831d9 #001c94 #001c94 #0a45d8; display: flex; flex-direction: column; }
.dlg-title { height: 28px; margin: 0 -4px; flex: none; display: flex; align-items: center; justify-content: space-between; padding: 2px 4px 0 8px; border-radius: 7px 7px 0 0; background: linear-gradient(#0a3fc0, #2f8dff 8%, #0557e8 22%, #0459ee 60%, #0468ff 90%, #0346c8); }
.dlg-title h1 { margin: 0; font-size: 15px; line-height: 20px; color: #fff; text-shadow: 1px 1px #0a1f7c; }
.close { width: 21px; height: 21px; border: 1px solid #fff; border-radius: 3px; background: linear-gradient(135deg, #f09070, #dc4a26 50%, #b83a18); display: grid; place-items: center; }
.close svg { width: 11px; stroke: #fff; stroke-width: 2; }
.dlg-body { flex: 1; background: #ebe9dc; display: flex; flex-direction: column; padding: 6px 7px 0 6px; }
.dtabs { display: flex; align-items: flex-end; gap: 2px; height: 21px; margin-bottom: -1px; }
.dtabs button { height: 18px; padding: 0 4px; border: 1px solid #91a7b4; border-radius: 3px 3px 0 0; background: linear-gradient(#fbfbf8, #f4ece6); white-space: nowrap; text-align: left; line-height: 15px; }
.dtabs .t1 { width: 47px; }
.dtabs .cur { height: 21px; width: 64px; padding: 0 7px; border-top: 3px solid #ffb83c; border-bottom: 0; background: #f9f9f5; margin-right: -2px; line-height: 14px; }
.panel { flex: 1; border: 1px solid #919b9c; background: linear-gradient(#f9f9f5 240px, #f4ece6 285px); padding: 4px 11px 0 10px; display: flex; flex-direction: column; box-shadow: inset -2px -2px #f9f9f5, 1px 1px #d0cec0; }
.lbl { margin: 0 2px 5px; line-height: 16px; }
.grid { height: 268px; background: #aca899; border: solid #716f64; border-width: 2px 1px 1px 2px; border-right-color: #f4f2ea; border-bottom-color: #f4f2ea; overflow: hidden; }
table { width: 100%; border-collapse: separate; border-spacing: 0; table-layout: fixed; }
.c1 { width: 71px; } .c2 { width: 107px; } .c3 { width: 33px; } .c4 { width: 124px; } .c5 { width: 117px; } .c6 { width: 83px; }
th, td { font-weight: normal; text-align: left; padding: 0 0 0 4px; white-space: nowrap; overflow: hidden; line-height: 16px; border-right: 1px solid #b8b8b8; border-bottom: 1px solid #b8b8b8; }
th { height: 22px; background: #ebe9dc; border-right-color: #716f64; border-bottom-color: #716f64; }
th.sorted { border: 1px solid #716f64; }
td { height: 21px; background: #f8f9f4; }
td.lat { font: 12px/16px "Liberation Sans", sans-serif; }
.hl td { background: #316ac5; color: #fff; }
.hl .focus { border: 1px solid #fff; padding-left: 3px; }
td.key { background: #a3a3f6; }
.row { display: flex; gap: 5px; padding: 7px 0 0 3px; }
.btn { width: 86px; height: 22px; border: 1px solid #003c74; border-radius: 3px; background: linear-gradient(#fbfbf8 50%, #f3ece4 60%, #e6e2d8); line-height: 18px; }
.btn.w { width: 114px; height: 20px; line-height: 16px; }
.focusb { box-shadow: inset 0 0 0 2px #9db8ee; outline: 1px dotted #223; outline-offset: -3px; }
.lbl2 { margin: 6px 3px 6px; line-height: 16px; }
.ta { height: 177px; border: 1px solid #7f9db9; background: #f8f9f4; display: grid; grid-template-columns: 1fr 17px; grid-template-rows: 1fr 17px; }
.ta textarea { border: 0; background: none; resize: none; outline: 0; width: 100%; }
.vs, .hs { display: flex; justify-content: space-between; background: linear-gradient(90deg, #f4ece6 3px, #f9f9f5 3px); }
.vs { flex-direction: column; align-items: center; }
.hs { align-items: center; background: linear-gradient(#f4ece6 3px, #f9f9f5 3px); }
.ta::after { content: ""; background: #ebe9dc; }
.dis { width: 15px; height: 16px; display: grid; place-items: center; background: #f0efe6; border: 1px solid #dddacb; border-radius: 2px; }
.dis svg { stroke: #c9c7ba; }
.foot { display: flex; gap: 9px; padding: 9px 0 0 230px; height: 34px; }
.foot .help { margin-left: auto; margin-right: -1px; }
```
